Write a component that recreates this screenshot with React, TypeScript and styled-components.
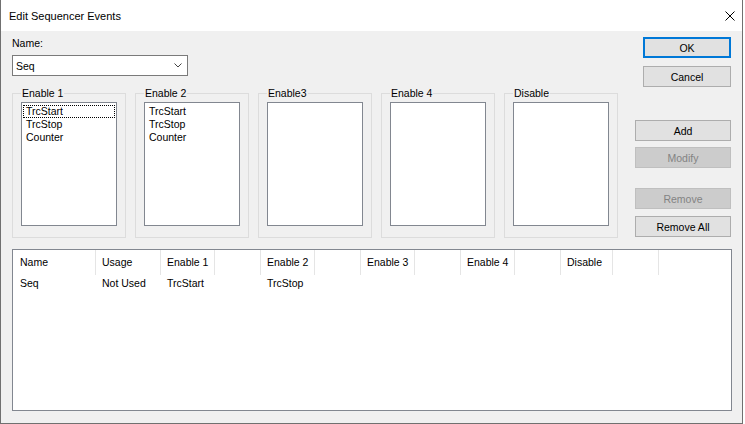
import React from 'react';
import styled, { createGlobalStyle } from 'styled-components';

const GlobalStyle = createGlobalStyle`
  html, body {
    margin: 0;
    padding: 0;
    background: #ffffff;
  }
  body {
    font-family: "Liberation Sans", Arial, sans-serif;
    font-size: 10.5px;
    color: #000000;
  }
`;

const Window = styled.div`
  width: 743px;
  height: 424px;
  box-sizing: border-box;
  border: 1px solid #707070;
  border-top: none;
  background: #f0f0f0;
  display: flex;
  flex-direction: column;
`;

const TitleBar = styled.div`
  flex: none;
  height: 31px;
  background: #ffffff;
  display: flex;
  align-items: center;
  justify-content: space-between;
  padding: 0 7px 0 8px;
`;

const Title = styled.span`
  font-size: 11px;
  color: #000000;
`;

const CloseButton = styled.span`
  display: flex;
  width: 10px;
  height: 10px;
`;

const Body = styled.div`
  flex: 1;
  padding: 6px 10px 0 11px;
`;

const TopSection = styled.div`
  display: flex;
  justify-content: space-between;
`;

const LeftColumn = styled.div`
  display: flex;
  flex-direction: column;
`;

const Label = styled.div`
  height: 13px;
  line-height: 13px;
  margin-bottom: 5px;
`;

const Combo = styled.div`
  width: 176px;
  height: 21px;
  box-sizing: border-box;
  border: 1px solid #7a7a7a;
  background: #ffffff;
  display: flex;
  align-items: center;
  justify-content: space-between;
  padding: 0 5px 0 3px;
`;

const GroupRow = styled.div`
  display: flex;
  gap: 9px;
  margin-top: 11px;
`;

const Group = styled.fieldset`
  width: 114px;
  height: 151px;
  box-sizing: border-box;
  margin: 0;
  padding: 2px 8px 0 8px;
  border: 1px solid #dcdcdc;
`;

const Legend = styled.legend`
  padding: 0 1px;
  line-height: 13px;
  font-size: 10.5px;
`;

const ListBox = styled.div`
  width: 96px;
  height: 124px;
  box-sizing: border-box;
  border: 1px solid #828790;
  background: #ffffff;
  padding-top: 2px;
`;

const ListItem = styled.div<{ $focused?: boolean }>`
  line-height: 13px;
  height: 13px;
  padding: 0 3px;
  margin: 0 1px;
  white-space: nowrap;
  outline: ${p => (p.$focused ? '1px dotted #000000' : 'none')};
  outline-offset: -1px;
`;

const RightColumn = styled.div`
  width: 96px;
  padding-right: 1px;
  display: flex;
  flex-direction: column;
  align-items: flex-end;
`;

const Button = styled.button<{ $width: number; $gap: number; $primary?: boolean }>`
  width: ${p => p.$width}px;
  height: 21px;
  margin-top: ${p => p.$gap}px;
  box-sizing: border-box;
  padding: 0;
  font-family: "Liberation Sans", Arial, sans-serif;
  font-size: 10.5px;
  color: #000000;
  background: #e1e1e1;
  border: ${p => (p.$primary ? '2px solid #0078d7' : '1px solid #adadad')};

  &:disabled {
    background: #cccccc;
    border-color: #bfbfbf;
    color: #838383;
  }
`;

const ListView = styled.div`
  margin-top: 11px;
  width: 720px;
  height: 162px;
  box-sizing: border-box;
  border: 1px solid #828790;
  background: #ffffff;
`;

const HeaderRow = styled.div`
  display: flex;
  height: 25px;
`;

const HeaderCell = styled.div<{ $width: number; $pad: number }>`
  width: ${p => p.$width}px;
  flex: none;
  box-sizing: border-box;
  padding-left: ${p => p.$pad}px;
  line-height: 25px;
  border-right: 1px solid #e5e5e5;
  white-space: nowrap;
`;

const DataRow = styled.div`
  display: flex;
  height: 17px;
`;

const DataCell = styled.div<{ $width: number; $pad: number }>`
  width: ${p => p.$width}px;
  flex: none;
  box-sizing: border-box;
  padding-left: ${p => p.$pad}px;
  line-height: 17px;
  white-space: nowrap;
`;

const groups = [
  { title: 'Enable 1', items: ['TrcStart', 'TrcStop', 'Counter'], focus: 0 },
  { title: 'Enable 2', items: ['TrcStart', 'TrcStop', 'Counter'] },
  { title: 'Enable3', items: [] },
  { title: 'Enable 4', items: [] },
  { title: 'Disable', items: [] },
];

const columns = [
  { title: 'Name', width: 83, pad: 7 },
  { title: 'Usage', width: 65, pad: 6 },
  { title: 'Enable 1', width: 54, pad: 6 },
  { title: '', width: 46, pad: 6 },
  { title: 'Enable 2', width: 54, pad: 6 },
  { title: '', width: 46, pad: 6 },
  { title: 'Enable 3', width: 54, pad: 6 },
  { title: '', width: 46, pad: 6 },
  { title: 'Enable 4', width: 54, pad: 6 },
  { title: '', width: 46, pad: 6 },
  { title: 'Disable', width: 52, pad: 6 },
  { title: '', width: 46, pad: 6 },
];

const rows = [['Seq', 'Not Used', 'TrcStart', '', 'TrcStop', '', '', '', '', '', '', '']];

const App: React.FC = () => {
  return (
    <>
      <GlobalStyle />
      <Window>
        <TitleBar>
          <Title>Edit Sequencer Events</Title>
          <CloseButton>
            <svg width="10" height="10" viewBox="0 0 10 10">
              <path d="M0.5 0.5 L9.5 9.5 M9.5 0.5 L0.5 9.5" stroke="#000" strokeWidth="1" fill="none" />
            </svg>
          </CloseButton>
        </TitleBar>
        <Body>
          <TopSection>
            <LeftColumn>
              <Label>Name:</Label>
              <Combo>
                <span>Seq</span>
                <svg width="8" height="5" viewBox="0 0 8 5">
                  <path d="M0.5 0.5 L4 4 L7.5 0.5" stroke="#444" strokeWidth="1" fill="none" />
                </svg>
              </Combo>
              <GroupRow>
                {groups.map(g => (
                  <Group key={g.title}>
                    <Legend>{g.title}</Legend>
                    <ListBox>
                      {g.items.map((item, i) => (
                        <ListItem key={item} $focused={g.focus === i}>
                          {item}
                        </ListItem>
                      ))}
                    </ListBox>
                  </Group>
                ))}
              </GroupRow>
            </LeftColumn>
            <RightColumn>
              <Button $width={88} $gap={0} $primary>OK</Button>
              <Button $width={88} $gap={8}>Cancel</Button>
              <Button $width={96} $gap={33}>Add</Button>
              <Button $width={96} $gap={6} disabled>Modify</Button>
              <Button $width={96} $gap={20} disabled>Remove</Button>
              <Button $width={96} $gap={7}>Remove All</Button>
            </RightColumn>
          </TopSection>
          <ListView>
            <HeaderRow>
              {columns.map((c, i) => (
                <HeaderCell key={i} $width={c.width} $pad={c.pad}>
                  {c.title}
                </HeaderCell>
              ))}
            </HeaderRow>
            {rows.map((r, ri) => (
              <DataRow key={ri}>
                {r.map((v, i) => (
                  <DataCell key={i} $width={columns[i].width} $pad={columns[i].pad}>
                    {v}
                  </DataCell>
                ))}
              </DataRow>
            ))}
          </ListView>
        </Body>
      </Window>
    </>
  );
};

export default App;
